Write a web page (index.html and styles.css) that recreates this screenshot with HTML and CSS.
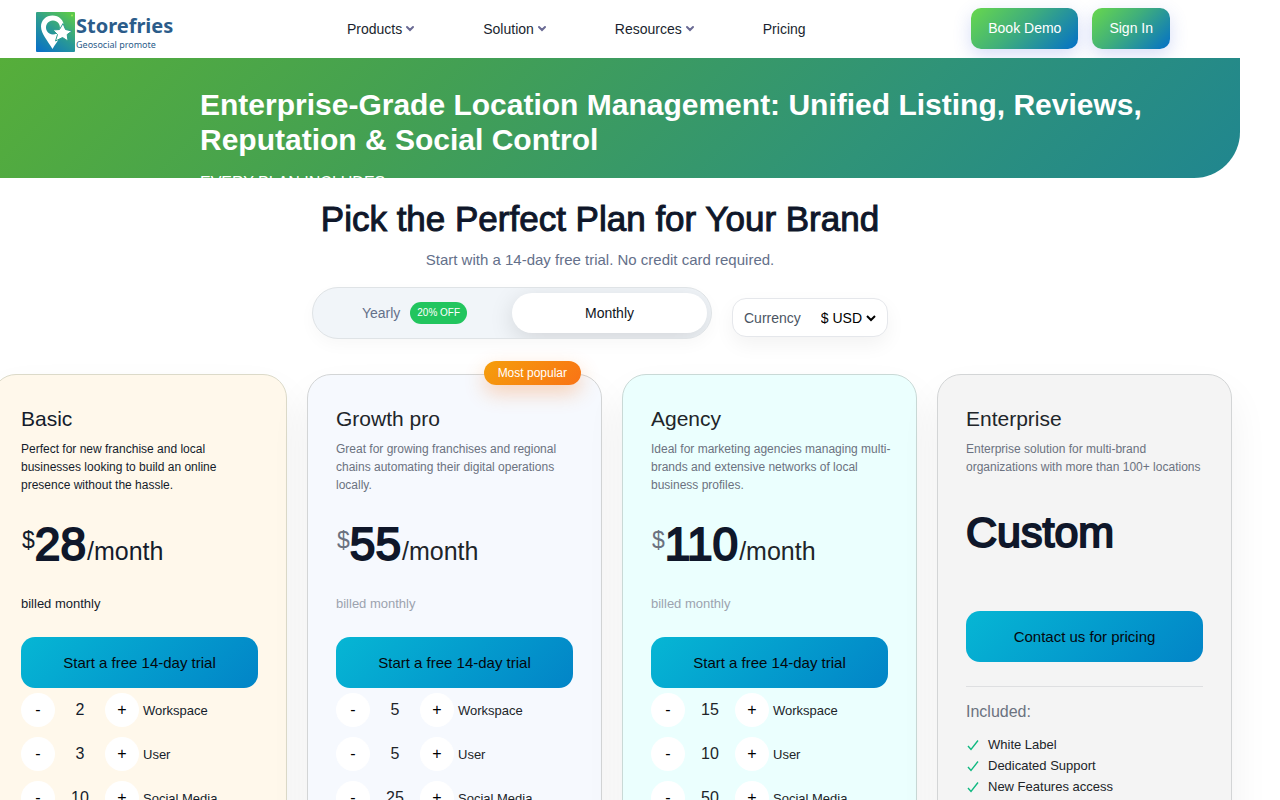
FILE: index.html
```html
<!DOCTYPE html>
<html lang="en">
<head>
<meta charset="utf-8">
<meta name="viewport" content="width=device-width, initial-scale=1">
<title>Storefries Pricing</title>
<link rel="stylesheet" href="styles.css">
</head>
<body>
<header class="topbar">
  <a class="logo" href="#">
    <svg class="logo-mark" viewBox="0 0 39 40" aria-hidden="true">
      <defs><linearGradient id="mark" x1="0.15" y1="1" x2="0.85" y2="0"><stop offset="0" stop-color="#0b73c4"/><stop offset="0.5" stop-color="#2a9a94"/><stop offset="1" stop-color="#5cc94a"/></linearGradient></defs>
      <rect width="39" height="40" rx="1" fill="url(#mark)"/>
      <path fill="#fff" fill-rule="evenodd" d="M16.500 3.500C10 3.500 5 8.300 5 14.500C5 22 12 29 16.500 37C21 29 28 22 28 14.500C28 8.300 23 3.500 16.500 3.500ZM17 8.500A7 7 0 1 1 16.900 8.500Z"/>
      <path fill="#fff" stroke="#2d9d8c" stroke-width="1" d="M27 11.500L29.500 17.500L36 19L31.200 22.500L32 29L26.500 25.500L19.500 29L21.500 22.500L17 18L23.500 17.500Z"/>
      <circle cx="36" cy="3.500" r="1" fill="#9be85a"/>
    </svg>
    <span class="logo-words"><span class="logo-name">Storefries</span><span class="logo-tag">Geosocial promote</span></span>
  </a>
  <nav class="menu">
    <a href="#">Products <svg class="chev" viewBox="0 0 10 7"><path d="M2 2L5 5L8 2"/></svg></a>
    <a href="#">Solution <svg class="chev" viewBox="0 0 10 7"><path d="M2 2L5 5L8 2"/></svg></a>
    <a href="#">Resources <svg class="chev" viewBox="0 0 10 7"><path d="M2 2L5 5L8 2"/></svg></a>
    <a href="#">Pricing</a>
  </nav>
  <div class="actions">
    <a class="action" href="#">Book Demo</a>
    <a class="action" href="#">Sign In</a>
  </div>
</header>

<main>
  <section class="hero">
    <h1>Enterprise-Grade Location Management: Unified Listing, Reviews, Reputation &amp; Social Control</h1>
    <p>EVERY PLAN INCLUDES</p>
  </section>

  <section class="intro">
    <h2>Pick the Perfect Plan for Your Brand</h2>
    <p>Start with a 14-day free trial. No credit card required.</p>
    <div class="controls">
      <div class="toggle">
        <button type="button">Yearly <span class="off">20% OFF</span></button>
        <button type="button" class="active">Monthly</button>
      </div>
      <div class="currency">
        <label for="currency">Currency</label>
        <select id="currency"><option>$ USD</option></select>
      </div>
    </div>
  </section>

  <section class="plans">
    <article class="card basic">
      <h3>Basic</h3>
      <p class="desc">Perfect for new franchise and local businesses looking to build an online presence without the hassle.</p>
      <div class="price"><span class="sign">$</span><strong>28</strong><span class="per">/month</span></div>
      <p class="billed">billed monthly</p>
      <button type="button" class="cta">Start a free 14-day trial</button>
      <ul class="limits">
        <li><button type="button">-</button><output>2</output><button type="button">+</button><span>Workspace</span></li>
        <li><button type="button">-</button><output>3</output><button type="button">+</button><span>User</span></li>
        <li><button type="button">-</button><output>10</output><button type="button">+</button><span>Social Media</span></li>
      </ul>
    </article>
    <article class="card growth">
      <span class="popular">Most popular</span>
      <h3>Growth pro</h3>
      <p class="desc">Great for growing franchises and regional chains automating their digital operations locally.</p>
      <div class="price"><span class="sign">$</span><strong>55</strong><span class="per">/month</span></div>
      <p class="billed">billed monthly</p>
      <button type="button" class="cta">Start a free 14-day trial</button>
      <ul class="limits">
        <li><button type="button">-</button><output>5</output><button type="button">+</button><span>Workspace</span></li>
        <li><button type="button">-</button><output>5</output><button type="button">+</button><span>User</span></li>
        <li><button type="button">-</button><output>25</output><button type="button">+</button><span>Social Media</span></li>
      </ul>
    </article>
    <article class="card agency">
      <h3>Agency</h3>
      <p class="desc">Ideal for marketing agencies managing multi-brands and extensive networks of local business profiles.</p>
      <div class="price"><span class="sign">$</span><strong>110</strong><span class="per">/month</span></div>
      <p class="billed">billed monthly</p>
      <button type="button" class="cta">Start a free 14-day trial</button>
      <ul class="limits">
        <li><button type="button">-</button><output>15</output><button type="button">+</button><span>Workspace</span></li>
        <li><button type="button">-</button><output>10</output><button type="button">+</button><span>User</span></li>
        <li><button type="button">-</button><output>50</output><button type="button">+</button><span>Social Media</span></li>
      </ul>
    </article>
    <article class="card enterprise">
      <h3>Enterprise</h3>
      <p class="desc">Enterprise solution for multi-brand organizations with more than 100+ locations</p>
      <div class="price custom"><strong>Custom</strong></div>
      <button type="button" class="cta">Contact us for pricing</button>
      <div class="included">
        <h4>Included:</h4>
        <ul>
          <li><svg viewBox="0 0 12 12"><path d="M1 7L4 10.500L11 1.500"/></svg>White Label</li>
          <li><svg viewBox="0 0 12 12"><path d="M1 7L4 10.500L11 1.500"/></svg>Dedicated Support</li>
          <li><svg viewBox="0 0 12 12"><path d="M1 7L4 10.500L11 1.500"/></svg>New Features access</li>
        </ul>
      </div>
    </article>
  </section>
</main>
</body>
</html>
```

FILE: styles.css
```css
* { box-sizing: border-box; }
body {
  margin: 0;
  height: 100vh;
  overflow: hidden;
  background: #fff;
  color: #212529;
  font-family: "Liberation Sans", Arial, sans-serif;
  font-size: 14px;
}
h1, h2, h3, h4, p, ul { margin: 0; padding: 0; font-weight: 400; }
ul { list-style: none; }
a { color: inherit; text-decoration: none; }
button, select { font: inherit; color: inherit; border: 0; padding: 0; }

/* Top bar */
.topbar {
  display: flex;
  align-items: center;
  justify-content: space-between;
  height: 58px;
  padding: 0 110px 1px 36px;
}
.logo { display: flex; align-items: center; gap: 1px; padding-top: 7px; color: #2b5c8a; }
.logo-mark { width: 39px; height: 40px; }
.logo-words { display: flex; flex-direction: column; font-family: "Noto Sans", sans-serif; }
.logo-name { font-size: 20px; line-height: 26px; font-weight: 700; }
.logo-tag { font-size: 9px; line-height: 12px; }
.menu { display: flex; gap: 68px; padding-left: 8px; color: #1a1f2e; }
.menu a { display: flex; align-items: center; gap: 3px; }
.chev { width: 10px; height: 7px; fill: none; stroke: #6a6a94; stroke-width: 2; stroke-linecap: round; }
.actions { display: flex; gap: 14px; }
.action {
  padding: 0 17px;
  line-height: 41px;
  border-radius: 10px;
  color: #fff;
  background: linear-gradient(135deg, #68d84c 0%, #3fae7c 45%, #0470c8 100%);
  box-shadow: 0 6px 18px rgba(70, 100, 220, 0.22);
}

/* Hero */
.hero {
  position: relative;
  height: 120px;
  margin-right: 40px;
  padding: 29px 60px 0 200px;
  overflow: hidden;
  border-bottom-right-radius: 46px;
  color: #fff;
  background: linear-gradient(135deg, #56ae3a 0%, #43a053 34%, #2f9378 70%, #20868f 100%);
}
.hero h1 { font-size: 30px; line-height: 35px; font-weight: 700; }
.hero p { margin-top: 14px; font-size: 16px; line-height: 24px; }

/* Heading and controls */
.intro { margin-right: 80px; padding-top: 18px; text-align: center; }
.intro h2 {
  color: #0f172a;
  font-size: 35px;
  line-height: 46px;
  -webkit-text-stroke: 1px #0f172a;
}
.intro p { margin-top: 8px; color: #64708a; font-size: 15px; line-height: 20px; }
.controls { display: flex; align-items: center; justify-content: center; gap: 20px; margin-top: 17px; }
.toggle {
  display: flex;
  width: 400px;
  height: 52px;
  padding: 5px 4px;
  border: 1px solid #dfe3e6;
  border-radius: 26px;
  background: #f1f5f9;
  box-shadow: 0 6px 16px rgba(15, 23, 42, 0.03);
  overflow: hidden;
}
.toggle button {
  flex: 1;
  display: flex;
  align-items: center;
  justify-content: center;
  gap: 10px;
  height: 40px;
  border-radius: 20px;
  background: transparent;
  color: #64708a;
}
.toggle .active { background: #fff; color: #10141c; box-shadow: 0 6px 24px rgba(0, 0, 0, 0.13); }
.off { padding: 0 7px; border-radius: 11px; background: #22c55e; color: #fff; font-size: 10px; line-height: 22px; }
.currency {
  display: flex;
  align-items: center;
  gap: 16px;
  margin-top: 9px;
  height: 39px;
  width: 156px;
  padding: 0 11px;
  border: 1px solid #e5e7eb;
  border-radius: 14px;
  background: #fff;
  color: #4b5563;
  box-shadow: 0 8px 20px rgba(0, 0, 0, 0.05);
}
.currency select { background: transparent; color: #000; }

/* Plans */
.plans {
  display: grid;
  grid-template-columns: repeat(4, 1fr);
  gap: 20px;
  margin: 35px 48px 0 -8px;
}
.card {
  position: relative;
  padding: 28px;
  border: 1px solid #d3d5d6;
  border-radius: 24px;
  box-shadow: 0 20px 40px rgba(0, 0, 0, 0.06);
}
.basic { background: #fff8eb; border-color: #dcdac9; color: #141c2c; }
.growth { background: #f6f9fe; }
.agency { background: #ebfffe; border-color: #c9d9d6; }
.enterprise { background: #f4f4f4; }
.card h3 { font-size: 21px; line-height: 32px; }
.desc { margin: 5px -8px 0 0; color: #6b7280; font-size: 12px; line-height: 18px; }
.price { display: flex; align-items: baseline; height: 68px; margin-top: 22px; line-height: 56px; }
.price strong { color: #0f172a; font-size: 46px; font-weight: 400; -webkit-text-stroke: 2px #0f172a; }
.sign { align-self: flex-start; padding-left: 1px; font-size: 23px; line-height: 48px; color: #6b7280; }
.per { padding-left: 1px; font-size: 25px; }
.billed { margin-top: 12px; color: #9ca3af; font-size: 13px; line-height: 16px; }
.basic .desc, .basic .billed, .basic .sign { color: #141c2c; }
.cta {
  display: block;
  width: 100%;
  height: 51px;
  margin-top: 25px;
  border-radius: 14px;
  color: #05080d;
  font-size: 15px;
  background: linear-gradient(135deg, #06b6d4, #0284c7);
}
.limits { padding-top: 5px; }
.limits li { display: flex; align-items: center; margin-bottom: 10px; }
.limits button { width: 34px; height: 34px; border-radius: 50%; background: #fff; color: #000; font-size: 16px; }
.limits output { width: 50px; text-align: center; font-size: 16px; }
.limits span { margin-left: 4px; font-size: 13px; }
.custom { margin-top: 28px; height: 82px; }
.price.custom strong { font-size: 43px; }
.included { margin-top: 24px; padding-top: 15px; border-top: 1px solid #dedfe1; }
.included h4 { color: #6b7280; font-size: 16px; line-height: 20px; }
.included ul { padding-top: 12px; }
.included li { display: flex; align-items: center; gap: 9px; padding-left: 1px; font-size: 13px; line-height: 21px; }
.included svg { width: 12px; height: 12px; fill: none; stroke: #10b981; stroke-width: 1.4; }
.popular {
  position: absolute;
  top: -14px;
  right: 20px;
  padding: 0 14px;
  border-radius: 12px;
  color: #fff;
  background: linear-gradient(135deg, #f59e0b, #f97316);
  box-shadow: 0 8px 20px rgba(249, 115, 22, 0.3);
  font-size: 12px;
  line-height: 24px;
}
```
